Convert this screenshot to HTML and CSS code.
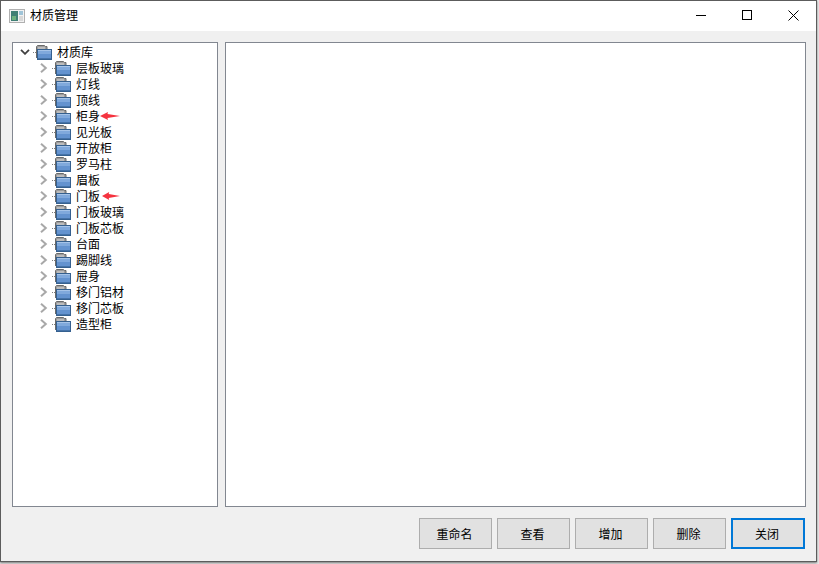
FILE: index.html
```html
<!DOCTYPE html>
<html lang="zh-CN">
<head>
    <meta charset="UTF-8">
    <title>材质管理</title>
    <link rel="stylesheet" href="styles.css">
</head>
<body>

<svg class="defs" width="0" height="0">
    <symbol id="folder" viewBox="0 0 16 16">
        <path d="M.5 14V2.500l1-1h7l1 1h1.500V6H.5z" fill="#9c9c9c" stroke="#6a6a6a"/>
        <path d="M2 3h7v2H2z" fill="#bcbcbc"/>
        <rect x="1.500" y="5.500" width="14" height="10" fill="#6493cf" stroke="#35608f"/>
        <rect x="2" y="6" width="13" height="1" fill="#a6c4e8"/>
        <rect x="2" y="7" width="13" height="3" fill="#80a9dc"/>
        <rect x="2" y="14" width="13" height="1" fill="#4673a8"/>
    </symbol>
    <symbol id="more" viewBox="0 0 8 10">
        <path d="M1 .8l4.800 4.200L1 9.200" fill="none" stroke="#a8a8a8" stroke-width="2"/>
    </symbol>
    <symbol id="less" viewBox="0 0 10 6">
        <path d="M1 .8l4 4 4-4" fill="none" stroke="#404040" stroke-width="1.800"/>
    </symbol>
    <symbol id="arrow" viewBox="0 0 20 8" preserveAspectRatio="none">
        <path d="M0 4L8 0 7.500 2 20 4 7.500 6 8 8z" fill="#f5333f"/>
    </symbol>
</svg>

<div class="window">
    <div class="titlebar">
        <svg class="app-icon" width="16" height="14" viewBox="0 0 16 14">
            <rect x=".5" y=".5" width="15" height="13" fill="#f2f2f2" stroke="#b0b0b0"/>
            <rect x="2" y="2" width="7" height="10" fill="#3f7f74"/>
            <rect x="3" y="7" width="4" height="4" fill="#6db07f"/>
            <rect x="10" y="2" width="4" height="4" fill="#9fc4d8"/>
            <rect x="10" y="7" width="4" height="5" fill="#d8d8d8"/>
        </svg>
        <span class="title">材质管理</span>
        <div class="controls">
            <div class="ctrl">
                <svg width="10" height="10" viewBox="0 0 10 10"><path d="M0 5.500h10" stroke="#000"/></svg>
            </div>
            <div class="ctrl">
                <svg width="10" height="10" viewBox="0 0 10 10"><rect x=".5" y=".5" width="9" height="9" fill="none" stroke="#000"/></svg>
            </div>
            <div class="ctrl">
                <svg width="11" height="11" viewBox="0 0 11 11"><path d="M.5.5l10 10M10.500.5l-10 10" stroke="#000"/></svg>
            </div>
        </div>
    </div>

    <div class="content">
        <div class="panes">
            <div class="tree pane">
                <div class="row root">
                    <svg class="toggle" width="10" height="6"><use href="#less"/></svg>
                    <span class="dots"></span>
                    <svg class="folder" width="16" height="16"><use href="#folder"/></svg>
                    <span class="label">材质库</span>
                </div>
                <div class="row">
                    <svg class="toggle" width="8" height="10"><use href="#more"/></svg>
                    <span class="dots"></span>
                    <svg class="folder" width="16" height="16"><use href="#folder"/></svg>
                    <span class="label">层板玻璃</span>
                </div>
                <div class="row">
                    <svg class="toggle" width="8" height="10"><use href="#more"/></svg>
                    <span class="dots"></span>
                    <svg class="folder" width="16" height="16"><use href="#folder"/></svg>
                    <span class="label">灯线</span>
                </div>
                <div class="row">
                    <svg class="toggle" width="8" height="10"><use href="#more"/></svg>
                    <span class="dots"></span>
                    <svg class="folder" width="16" height="16"><use href="#folder"/></svg>
                    <span class="label">顶线</span>
                </div>
                <div class="row">
                    <svg class="toggle" width="8" height="10"><use href="#more"/></svg>
                    <span class="dots"></span>
                    <svg class="folder" width="16" height="16"><use href="#folder"/></svg>
                    <span class="label">柜身</span>
                    <svg class="mark" width="20" height="8"><use href="#arrow"/></svg>
                </div>
                <div class="row">
                    <svg class="toggle" width="8" height="10"><use href="#more"/></svg>
                    <span class="dots"></span>
                    <svg class="folder" width="16" height="16"><use href="#folder"/></svg>
                    <span class="label">见光板</span>
                </div>
                <div class="row">
                    <svg class="toggle" width="8" height="10"><use href="#more"/></svg>
                    <span class="dots"></span>
                    <svg class="folder" width="16" height="16"><use href="#folder"/></svg>
                    <span class="label">开放柜</span>
                </div>
                <div class="row">
                    <svg class="toggle" width="8" height="10"><use href="#more"/></svg>
                    <span class="dots"></span>
                    <svg class="folder" width="16" height="16"><use href="#folder"/></svg>
                    <span class="label">罗马柱</span>
                </div>
                <div class="row">
                    <svg class="toggle" width="8" height="10"><use href="#more"/></svg>
                    <span class="dots"></span>
                    <svg class="folder" width="16" height="16"><use href="#folder"/></svg>
                    <span class="label">眉板</span>
                </div>
                <div class="row">
                    <svg class="toggle" width="8" height="10"><use href="#more"/></svg>
                    <span class="dots"></span>
                    <svg class="folder" width="16" height="16"><use href="#folder"/></svg>
                    <span class="label">门板</span>
                    <svg class="mark mark-short" width="18" height="8"><use href="#arrow"/></svg>
                </div>
                <div class="row">
                    <svg class="toggle" width="8" height="10"><use href="#more"/></svg>
                    <span class="dots"></span>
                    <svg class="folder" width="16" height="16"><use href="#folder"/></svg>
                    <span class="label">门板玻璃</span>
                </div>
                <div class="row">
                    <svg class="toggle" width="8" height="10"><use href="#more"/></svg>
                    <span class="dots"></span>
                    <svg class="folder" width="16" height="16"><use href="#folder"/></svg>
                    <span class="label">门板芯板</span>
                </div>
                <div class="row">
                    <svg class="toggle" width="8" height="10"><use href="#more"/></svg>
                    <span class="dots"></span>
                    <svg class="folder" width="16" height="16"><use href="#folder"/></svg>
                    <span class="label">台面</span>
                </div>
                <div class="row">
                    <svg class="toggle" width="8" height="10"><use href="#more"/></svg>
                    <span class="dots"></span>
                    <svg class="folder" width="16" height="16"><use href="#folder"/></svg>
                    <span class="label">踢脚线</span>
                </div>
                <div class="row">
                    <svg class="toggle" width="8" height="10"><use href="#more"/></svg>
                    <span class="dots"></span>
                    <svg class="folder" width="16" height="16"><use href="#folder"/></svg>
                    <span class="label">屉身</span>
                </div>
                <div class="row">
                    <svg class="toggle" width="8" height="10"><use href="#more"/></svg>
                    <span class="dots"></span>
                    <svg class="folder" width="16" height="16"><use href="#folder"/></svg>
                    <span class="label">移门铝材</span>
                </div>
                <div class="row">
                    <svg class="toggle" width="8" height="10"><use href="#more"/></svg>
                    <span class="dots"></span>
                    <svg class="folder" width="16" height="16"><use href="#folder"/></svg>
                    <span class="label">移门芯板</span>
                </div>
                <div class="row">
                    <svg class="toggle" width="8" height="10"><use href="#more"/></svg>
                    <span class="dots"></span>
                    <svg class="folder" width="16" height="16"><use href="#folder"/></svg>
                    <span class="label">造型柜</span>
                </div>
            </div>
            <div class="detail pane"></div>
        </div>

        <div class="buttons">
            <button class="btn">重命名</button>
            <button class="btn">查看</button>
            <button class="btn">增加</button>
            <button class="btn">删除</button>
            <button class="btn btn-focus">关闭</button>
        </div>
    </div>
</div>

</body>
</html>
```

FILE: styles.css
```css
html, body {
    margin: 0;
    height: 100%;
    overflow: hidden;
}

body {
    background-color: #e8e8e8;
    font-family: "Noto Sans CJK SC", "Liberation Sans", sans-serif;
    font-size: 12px;
    color: #000;
}

.defs {
    position: absolute;
}

.window {
    box-sizing: border-box;
    width: 817px;
    height: 562px;
    display: flex;
    flex-direction: column;
    border: 1px solid #5c5c5c;
    background-color: #f0f0f0;
    box-shadow: 0 1px 2px #777;
}

/* title bar */
.titlebar {
    height: 30px;
    flex: none;
    display: flex;
    align-items: center;
    background-color: #fff;
    padding-left: 8px;
}

.app-icon {
    flex: none;
}

.title {
    margin-left: 5px;
    padding-bottom: 3px;
    flex: 1;
}

.controls {
    display: flex;
    align-self: stretch;
    padding-bottom: 2px;
}

.ctrl {
    width: 46px;
    display: flex;
    align-items: center;
    justify-content: center;
}

/* main area */
.content {
    flex: 1;
    display: flex;
    flex-direction: column;
    padding: 11px 10px 12px 11px;
    min-height: 0;
}

.panes {
    flex: 1;
    display: flex;
    gap: 7px;
    min-height: 0;
}

.pane {
    box-sizing: border-box;
    background-color: #fff;
    border: 1px solid #828790;
}

.tree {
    width: 206px;
    flex: none;
    padding-top: 1px;
}

.detail {
    flex: 1;
}

.row {
    height: 16px;
    display: flex;
    align-items: center;
    padding-left: 27px;
    white-space: nowrap;
}

.row.root {
    padding-left: 7px;
}

.toggle {
    flex: none;
}

.root .toggle {
    margin-right: 3px;
}

.dots {
    width: 3px;
    height: 1px;
    margin-left: 4px;
    background-image: linear-gradient(to right, #808080 1px, transparent 1px);
    background-size: 2px 1px;
    flex: none;
}

.root .dots {
    margin-left: 0;
}

.folder {
    flex: none;
}

.label {
    margin-left: 5px;
    line-height: 16px;
}

.mark {
    flex: none;
}

.mark-short {
    margin-left: 2px;
}

/* buttons */
.buttons {
    flex: none;
    display: flex;
    justify-content: flex-end;
    gap: 5px;
    margin-top: 11px;
    margin-right: 1px;
}

.btn {
    box-sizing: border-box;
    width: 73px;
    height: 31px;
    padding: 0 2px 0 0;
    background-color: #e1e1e1;
    border: 1px solid #adadad;
    font-family: inherit;
    font-size: 12px;
    color: #000;
}

.btn-focus {
    width: 74px;
    border: 2px solid #0078d7;
}
```
